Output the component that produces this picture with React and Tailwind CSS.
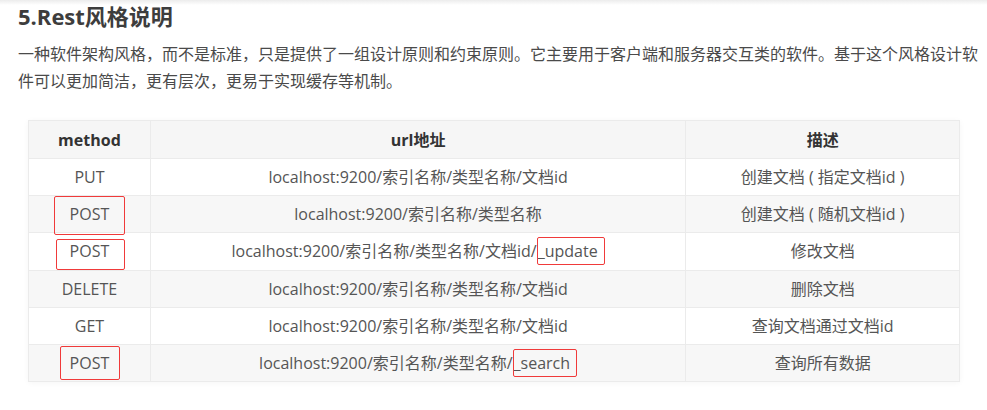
const rows = [
  { method: 'PUT', url: 'localhost:9200/索引名称/类型名称/文档id', desc: '创建文档 ( 指定文档id )' },
  { method: 'POST', url: 'localhost:9200/索引名称/类型名称', desc: '创建文档 ( 随机文档id )', box: 'left-[25px] top-[0px] w-[71px] h-[39px]' },
  { method: 'POST', url: 'localhost:9200/索引名称/类型名称/文档id/', tail: '_update', desc: '修改文档', box: 'left-[27px] top-[6px] w-[69px] h-[31px]' },
  { method: 'DELETE', url: 'localhost:9200/索引名称/类型名称/文档id', desc: '删除文档' },
  { method: 'GET', url: 'localhost:9200/索引名称/类型名称/文档id', desc: '查询文档通过文档id' },
  { method: 'POST', url: 'localhost:9200/索引名称/类型名称/', tail: '_search', desc: '查询所有数据', box: 'left-[31px] top-[1px] w-[60px] h-[34px]' },
];

export default function App() {
  return (
    <div className="relative w-[987px] h-[410px] bg-white overflow-hidden">
      <div className="h-[5px] bg-gradient-to-b from-[#ececec] to-white" />
      <div className="pl-[18px] -mt-[4px]">
        <h2 className="text-[22px] leading-[30px] font-bold text-[#3d3d3d] font-['Open_Sans','Noto_Sans_CJK_SC',sans-serif]">
          5.Rest风格说明
        </h2>
        <p className="mt-[9px] whitespace-nowrap text-[16px] leading-[27px] text-[#4a4a4a] font-['Noto_Sans_CJK_SC',sans-serif]">
          一种软件架构风格，而不是标准，只是提供了一组设计原则和约束原则。它主要用于客户端和服务器交互类的软件。基于这个风格设计软
          <br />
          件可以更加简洁，更有层次，更易于实现缓存等机制。
        </p>
      </div>

      <div className="ml-[28px] mt-[26px] w-[932px] border-t border-l border-[#ebebeb] shadow-[0_1px_6px_rgba(0,0,0,0.04)] font-['Open_Sans','Noto_Sans_CJK_SC',sans-serif] text-[16px] text-[#555]">
        <div className="flex h-[38px] bg-[#f6f6f6] border-b border-[#ebebeb] font-bold text-[#333]">
          <div className="w-[122px] flex items-center justify-center border-r border-[#ebebeb]">method</div>
          <div className="w-[536px] flex items-center justify-center border-r border-[#ebebeb]">url地址</div>
          <div className="w-[274px] flex items-center justify-center border-r border-[#ebebeb]">描述</div>
        </div>
        {rows.map((r, i) => (
          <div
            key={i}
            className={`flex h-[37.2px] border-b border-[#ebebeb] ${i % 2 === 1 ? 'bg-[#f7f7f7]' : 'bg-white'}`}
          >
            <div className="relative w-[122px] flex items-center justify-center border-r border-[#ebebeb]">
              {r.method}
              {r.box && (
                <span className={`absolute ${r.box} border border-[#f03a3a] rounded-[2px]`} />
              )}
            </div>
            <div className="w-[536px] flex items-center justify-center border-r border-[#ebebeb] whitespace-pre">
              {r.url}
              {r.tail && (
                <span className="border border-[#f03a3a] rounded-[2px] pr-[6px] py-[2px] leading-[22px]">
                  {r.tail}
                </span>
              )}
            </div>
            <div className="w-[274px] flex items-center justify-center border-r border-[#ebebeb] whitespace-pre">
              {r.desc}
            </div>
          </div>
        ))}
      </div>
    </div>
  );
}
